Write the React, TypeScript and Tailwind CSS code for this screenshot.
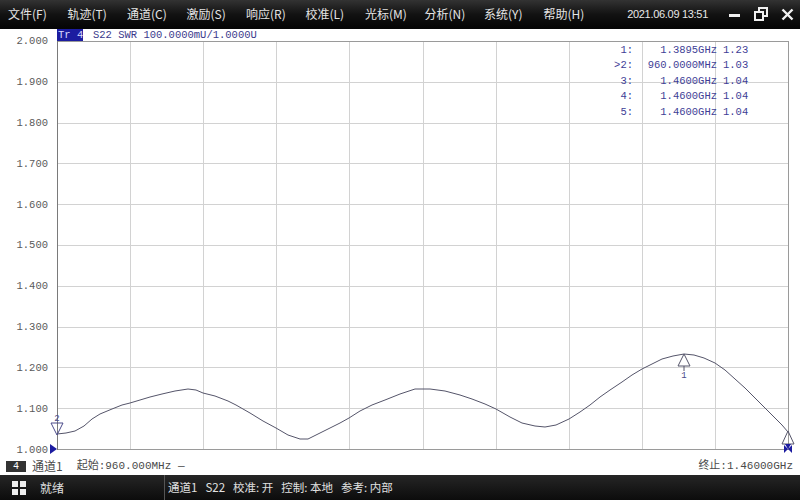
const MENU = ["文件(F)", "轨迹(T)", "通道(C)", "激励(S)", "响应(R)", "校准(L)", "光标(M)", "分析(N)", "系统(Y)", "帮助(H)"];

const Y_LABELS = ["2.000", "1.900", "1.800", "1.700", "1.600", "1.500", "1.400", "1.300", "1.200", "1.100", "1.000"];

const MARKERS = [
  { id: "1:", freq: "1.3895GHz", val: "1.23" },
  { id: ">2:", freq: "960.0000MHz", val: "1.03" },
  { id: "3:", freq: "1.4600GHz", val: "1.04" },
  { id: "4:", freq: "1.4600GHz", val: "1.04" },
  { id: "5:", freq: "1.4600GHz", val: "1.04" },
];

// trace points in page pixels, shifted into the plot below
const TRACE: [number, number][] = [
  [57, 436], [66, 435], [75, 433], [84, 428], [92, 421], [100, 416], [112, 411],
  [122, 407], [130, 405], [140, 402], [150, 399], [162, 396], [175, 393], [188, 391],
  [196, 392], [203, 395], [215, 398], [228, 403], [236, 407], [250, 415], [263, 423],
  [276, 430], [288, 437], [300, 441], [308, 441], [318, 436], [330, 430], [340, 425],
  [349, 420], [360, 413], [372, 407], [385, 402], [400, 396], [415, 391], [430, 391],
  [445, 393], [460, 397], [472, 401], [485, 406], [496, 411], [510, 419], [522, 425],
  [535, 428], [545, 429], [556, 427], [569, 421], [580, 414], [590, 407], [600, 399],
  [610, 392], [622, 384], [632, 377], [642, 371], [652, 366], [662, 361], [673, 358],
  [684, 356], [694, 357], [704, 360], [715, 365], [725, 372], [735, 381], [745, 390],
  [755, 400], [765, 410], [775, 420], [782, 427], [788, 434],
];

const pts = TRACE.map(([x, y]) => `${x - 57},${y - 43}`).join(" ");

function Plot() {
  const W = 731;
  const H = 408;
  return (
    <div className="relative w-[732px] h-[409px]">
      <svg width="732" height="409" className="absolute inset-0 overflow-visible">
        {Array.from({ length: 9 }).map((_, i) => (
          <line key={"v" + i} x1={Math.round((i + 1) * 73.1) + 0.5} y1={0} x2={Math.round((i + 1) * 73.1) + 0.5} y2={H} stroke="#d2d2d2" />
        ))}
        {Array.from({ length: 9 }).map((_, i) => (
          <line key={"h" + i} x1={0} y1={Math.round((i + 1) * 40.8) + 0.5} x2={W} y2={Math.round((i + 1) * 40.8) + 0.5} stroke="#d2d2d2" />
        ))}
        <rect x="0.5" y="0.5" width={W} height={H} fill="none" stroke="#9a9a9a" />
        <line x1="0.5" y1="0" x2="0.5" y2={H + 1} stroke="#7a7a7a" />
        <polyline points={pts} fill="none" stroke="#55556a" strokeWidth="1" strokeLinejoin="round" />

        {/* marker 1 */}
        <polygon points="627,313 621,325 633,325" fill="none" stroke="#55556a" />
        <line x1="627" y1="325" x2="627" y2="330" stroke="#55556a" />
        <text x="627" y="337" fontSize="9" textAnchor="middle" fill="#4a4a8a" fontFamily="Liberation Mono, monospace">1</text>

        {/* marker 2 */}
        <polygon points="-6,382 6,382 0,394" fill="none" stroke="#4a4a8a" />
        <text x="0" y="380" fontSize="9" textAnchor="middle" fill="#4a4a8a" fontFamily="Liberation Mono, monospace">2</text>

        {/* markers 3-5 at stop */}
        <polygon points="731,390 725,403 737,403" fill="none" stroke="#55556a" />
        <polygon points="728,403 731,408 734,403" fill="#1c1ca0" />
        <path d="M727 404 L727 412 L731 408 Z M735 404 L735 412 L731 408 Z" fill="#1c1ca0" />

        {/* reference arrow */}
        <polygon points="-7,403 -7,413 0,408" fill="#1c1ca0" />
      </svg>

      <div className="absolute top-[2px] left-[489px] grid grid-cols-[87px_84px_auto] leading-[15.4px] text-[10.5px] text-[#3e3e96] [font-family:'Liberation_Mono',monospace]">
        {MARKERS.map((m) => (
          <div key={m.id} className="contents">
            <span className="text-right">{m.id}</span>
            <span className="text-right">{m.freq}</span>
            <span className="pl-[6px]">{m.val}</span>
          </div>
        ))}
      </div>
    </div>
  );
}

function WindowButtons() {
  return (
    <div className="flex items-center gap-[13px] pr-[6px]">
      <svg width="13" height="13" viewBox="0 0 13 13">
        <rect x="1" y="6" width="11" height="3" fill="#f0f0f0" />
      </svg>
      <svg width="14" height="14" viewBox="0 0 14 14" fill="none" stroke="#f0f0f0" strokeWidth="2">
        <rect x="1" y="5" width="8" height="8" />
        <path d="M5 4 V1 H13 V9 H10" />
      </svg>
      <svg width="13" height="13" viewBox="0 0 13 13" stroke="#f0f0f0" strokeWidth="2.4">
        <path d="M1.5 1.5 L11.5 11.5 M11.5 1.5 L1.5 11.5" />
      </svg>
    </div>
  );
}

export default function App() {
  return (
    <div className="w-[800px] h-[500px] flex flex-col bg-white overflow-hidden [font-family:'Noto_Sans_CJK_SC',sans-serif]">
      {/* menu bar */}
      <div className="h-[30px] flex items-center bg-linear-to-b from-[#333333] via-[#121212] to-[#050505] text-[#e4e4e4] text-[12px]">
        <div className="flex pl-[8px]">
          {MENU.map((m) => (
            <span key={m} className="w-[59.5px] whitespace-nowrap">{m}</span>
          ))}
        </div>
        <span className="ml-auto mr-[20px] text-[11px] tracking-[-0.3px] text-[#e8e8e8] [font-family:'Liberation_Sans',sans-serif]">2021.06.09 13:51</span>
        <WindowButtons />
      </div>

      {/* trace header */}
      <div className="h-[13px] flex items-end pl-[57px] text-[10.5px] leading-[12px] text-[#3a3a8c] [font-family:'Liberation_Mono',monospace]">
        <span className="w-[26px] h-[12px] bg-[#1c1ca0] text-[#d8d8ff] pl-[1px] whitespace-pre">Tr 4</span>
        <span className="ml-[10px] whitespace-pre">S22 SWR 100.0000mU/1.0000U</span>
      </div>

      {/* axis + plot */}
      <div className="flex">
        <div className="w-[57px] h-[423px] -mt-[7px] flex flex-col justify-between pr-[9px] text-right text-[10.5px] leading-[14px] text-[#5a5a5a] [font-family:'Liberation_Mono',monospace]">
          {Y_LABELS.map((l) => (
            <span key={l} className="h-[14px]">{l}</span>
          ))}
        </div>
        <Plot />
      </div>

      {/* info line */}
      <div className="flex-1 flex items-center text-[11px] text-[#4a4a4a] [font-family:'Liberation_Mono','Noto_Sans_CJK_SC',monospace]">
        <span className="ml-[6px] w-[20px] h-[11px] bg-[#333] text-white text-[10px] leading-[11px] text-center">4</span>
        <span className="ml-[6px] [font-family:'Noto_Sans_CJK_SC',sans-serif] text-[12px]">通道1</span>
        <span className="ml-[14px]">起始:960.000MHz —</span>
        <span className="ml-auto mr-[7px]">终止:1.46000GHz</span>
      </div>

      {/* status bar */}
      <div className="h-[25px] flex items-center bg-linear-to-b from-[#262626] to-[#0c0c0c] text-[#e0e0e0] text-[12px]">
        <div className="ml-[12px] grid grid-cols-2 gap-[2px]">
          <span className="w-[6px] h-[6px] bg-[#eeeeee]" />
          <span className="w-[6px] h-[6px] bg-[#eeeeee]" />
          <span className="w-[6px] h-[6px] bg-[#eeeeee]" />
          <span className="w-[6px] h-[6px] bg-[#eeeeee]" />
        </div>
        <span className="ml-[14px] w-[124px]">就绪</span>
        <div className="w-px h-[25px] bg-[#555]" />
        <div className="ml-[3px] flex gap-[8px] text-[11.5px] whitespace-pre">
          <span>通道1</span>
          <span>S22</span>
          <span>校准: 开</span>
          <span>控制: 本地</span>
          <span>参考: 内部</span>
        </div>
      </div>
    </div>
  );
}
